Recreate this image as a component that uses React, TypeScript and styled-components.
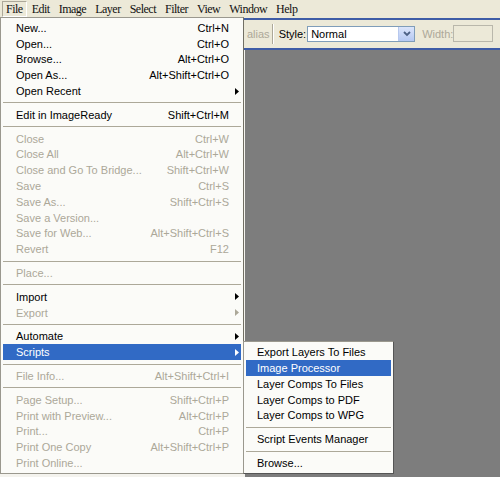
import React from 'react'
import styled, { createGlobalStyle } from 'styled-components'

type Entry =
  | { sep: true }
  | {
      sep?: false,
      label: string,
      shortcut?: string,
      disabled?: boolean,
      arrow?: boolean,
      active?: boolean,
    }

const fileMenu: Entry[] = [
  { label: 'New...', shortcut: 'Ctrl+N' },
  { label: 'Open...', shortcut: 'Ctrl+O' },
  { label: 'Browse...', shortcut: 'Alt+Ctrl+O' },
  { label: 'Open As...', shortcut: 'Alt+Shift+Ctrl+O' },
  { label: 'Open Recent', arrow: true },
  { sep: true },
  { label: 'Edit in ImageReady', shortcut: 'Shift+Ctrl+M' },
  { sep: true },
  { label: 'Close', shortcut: 'Ctrl+W', disabled: true },
  { label: 'Close All', shortcut: 'Alt+Ctrl+W', disabled: true },
  { label: 'Close and Go To Bridge...', shortcut: 'Shift+Ctrl+W', disabled: true },
  { label: 'Save', shortcut: 'Ctrl+S', disabled: true },
  { label: 'Save As...', shortcut: 'Shift+Ctrl+S', disabled: true },
  { label: 'Save a Version...', disabled: true },
  { label: 'Save for Web...', shortcut: 'Alt+Shift+Ctrl+S', disabled: true },
  { label: 'Revert', shortcut: 'F12', disabled: true },
  { sep: true },
  { label: 'Place...', disabled: true },
  { sep: true },
  { label: 'Import', arrow: true },
  { label: 'Export', arrow: true, disabled: true },
  { sep: true },
  { label: 'Automate', arrow: true },
  { label: 'Scripts', arrow: true, active: true },
  { sep: true },
  { label: 'File Info...', shortcut: 'Alt+Shift+Ctrl+I', disabled: true },
  { sep: true },
  { label: 'Page Setup...', shortcut: 'Shift+Ctrl+P', disabled: true },
  { label: 'Print with Preview...', shortcut: 'Alt+Ctrl+P', disabled: true },
  { label: 'Print...', shortcut: 'Ctrl+P', disabled: true },
  { label: 'Print One Copy', shortcut: 'Alt+Shift+Ctrl+P', disabled: true },
  { label: 'Print Online...', disabled: true },
]

const scriptsMenu: Entry[] = [
  { label: 'Export Layers To Files' },
  { label: 'Image Processor', active: true },
  { label: 'Layer Comps To Files' },
  { label: 'Layer Comps to PDF' },
  { label: 'Layer Comps to WPG' },
  { sep: true },
  { label: 'Script Events Manager' },
  { sep: true },
  { label: 'Browse...' },
]

const menuBar = ['File', 'Edit', 'Image', 'Layer', 'Select', 'Filter', 'View', 'Window', 'Help']

const GlobalStyle = createGlobalStyle`
  html, body {
    margin: 0;
    padding: 0;
    background: #f4f3ee;
  }
  body {
    font-family: 'Liberation Sans', Arial, sans-serif;
    font-size: 11px;
  }
`

const Arrow: React.FC = () => (
  <svg width="4" height="7" viewBox="0 0 4 7">
    <polygon points="0,0 4,3.5 0,7" fill="currentColor" />
  </svg>
)

const Chevron: React.FC = () => (
  <svg width="8" height="6" viewBox="0 0 8 6">
    <polyline points="1,1 4,4 7,1" fill="none" stroke="#4d6185" strokeWidth="1.8" />
  </svg>
)

const MenuList: React.FC<{ items: Entry[], sub?: boolean }> = ({ items, sub }) => (
  <>
    {items.map((it, i) =>
      it.sep ? (
        <Separator key={i} />
      ) : (
        <Item key={i} $disabled={it.disabled} $active={it.active} $sub={sub}>
          <Label>{it.label}</Label>
          {it.shortcut && <Shortcut>{it.shortcut}</Shortcut>}
          {!sub && <ArrowSlot>{it.arrow && <Arrow />}</ArrowSlot>}
          {it.label === 'Scripts' && (
            <SubMenu>
              <MenuList items={scriptsMenu} sub />
            </SubMenu>
          )}
        </Item>
      )
    )}
  </>
)

export default function App() {
  return (
    <>
      <GlobalStyle />
      <Screen>
        <MenuBar>
          {menuBar.map((m) => (
            <BarItem key={m} $open={m === 'File'}>{m}</BarItem>
          ))}
        </MenuBar>
        <OptionsBar>
          <OptionText $disabled>alias</OptionText>
          <VSep />
          <OptionText>Style:</OptionText>
          <Select>
            <SelectValue>Normal</SelectValue>
            <DropButton><Chevron /></DropButton>
          </Select>
          <OptionText $disabled>Width:</OptionText>
          <Field />
        </OptionsBar>
        <Workspace>
          <Palette />
          <Canvas />
        </Workspace>
        <DropMenu>
          <MenuList items={fileMenu} />
        </DropMenu>
      </Screen>
    </>
  )
}

const Screen = styled.div`
  position: relative;
  width: 500px;
  height: 477px;
  overflow: hidden;
  display: flex;
  flex-direction: column;
  background: #ece9d8;
`

const MenuBar = styled.div`
  display: flex;
  align-items: center;
  height: 17px;
  padding-left: 2px;
  background: #ece9d8;
`

const BarItem = styled.div<{ $open?: boolean }>`
  height: 16px;
  line-height: 15px;
  box-sizing: border-box;
  padding: 0 3px;
  margin-right: 1px;
  font-family: 'Liberation Serif', 'Times New Roman', serif;
  font-size: 12px;
  letter-spacing: -0.5px;
  color: #111;
  border: 1px solid transparent;
  ${(p) => p.$open && `
    border-color: #aca899 #fff #fff #aca899;
  `}
`

const OptionsBar = styled.div`
  display: flex;
  align-items: center;
  height: 28px;
  margin-top: 1px;
  padding-left: 247px;
  border-top: 2px solid #3e5ca6;
  border-bottom: 2px solid #3e5ca6;
  background: #ece9d8;
`

const OptionText = styled.span<{ $disabled?: boolean }>`
  color: ${(p) => (p.$disabled ? '#aca899' : '#000')};
`

const VSep = styled.div`
  width: 1px;
  height: 20px;
  margin: 0 5px 0 2px;
  background: #aca899;
  border-right: 1px solid #fff;
`

const Select = styled.div`
  display: flex;
  align-items: stretch;
  width: 108px;
  height: 16px;
  box-sizing: border-box;
  margin: 0 7px 0 1px;
  border: 1px solid #7f9db9;
  background: #fff;
`

const SelectValue = styled.div`
  flex: 1;
  padding-left: 3px;
  line-height: 14px;
  color: #000;
`

const DropButton = styled.div`
  width: 15px;
  display: flex;
  align-items: center;
  justify-content: center;
  background: linear-gradient(#dbe5fb, #b5c8f2);
  border-left: 1px solid #b7c8ee;
`

const Field = styled.div`
  width: 38px;
  height: 15px;
  margin-top: -1px;
  border: 1px solid #b9b7ab;
  background: #ece9d8;
`

const Workspace = styled.div`
  flex: 1;
  display: flex;
`

const Palette = styled.div`
  width: 245px;
  background: #f4f3ee;
`

const Canvas = styled.div`
  flex: 1;
  background: #7d7d7d;
`

const DropMenu = styled.div`
  position: absolute;
  top: 17px;
  left: 0;
  width: 244px;
  box-sizing: border-box;
  padding: 2px;
  border: 1px solid #9a988e;
  border-right-color: #716f64;
  background: #fbfbf8;
`

const SubMenu = styled.div`
  position: absolute;
  top: -3px;
  left: calc(100% + 2px);
  width: 151px;
  box-sizing: border-box;
  padding: 2px;
  border: 1px solid #9a988e;
  border-right-color: #555;
  border-bottom-color: #555;
  background: #fbfbf8;
`

const Item = styled.div<{ $disabled?: boolean, $active?: boolean, $sub?: boolean }>`
  position: relative;
  display: flex;
  align-items: center;
  height: 15.8px;
  padding-left: ${(p) => (p.$sub ? '11px' : '13px')};
  color: ${(p) => (p.$active ? '#fff' : p.$disabled ? '#aca899' : '#000')};
  background: ${(p) => (p.$active ? '#316ac5' : 'transparent')};
  white-space: nowrap;
`

const Label = styled.span`
  flex: 1;
`

const Shortcut = styled.span``

const ArrowSlot = styled.span`
  width: 12px;
  display: flex;
  align-items: center;
  padding-left: 6px;
  box-sizing: border-box;
`

const Separator = styled.div`
  height: 8px;
  display: flex;
  align-items: center;
  &::after {
    content: '';
    flex: 1;
    height: 1px;
    background: #aca899;
  }
`
